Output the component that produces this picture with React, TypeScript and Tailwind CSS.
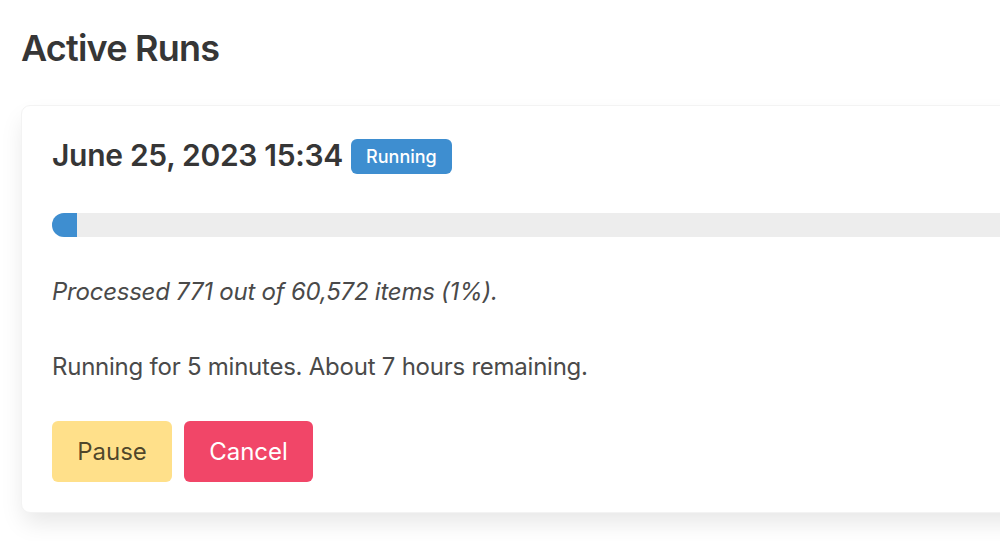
export default function App() {
  const processed = 771;
  const total = 60572;
  const pct = 2.5;

  return (
    <div className="h-[541px] w-[1000px] overflow-hidden bg-white font-['Inter','Liberation_Sans',sans-serif] text-[#4a4a4a]">
      <div className="w-[1100px] pl-[21px] pt-[28px]">
        <h1 className="text-[36px] leading-[40px] font-semibold tracking-[-0.022em] text-[#363636]">Active Runs</h1>

        <div className="mt-[37px] rounded-[9px] border border-[#f3f3f3] bg-white pl-[30px] pr-[31px] pt-[30px] pb-[30px] shadow-[0_12px_24px_-3px_rgba(10,10,10,0.1)]">
          <div className="flex items-center gap-[8px]">
            <h2 className="text-[30px] leading-[36px] font-semibold tracking-[-0.01em] text-[#363636]">June 25, 2023 15:34</h2>
            <span className="mt-[3px] inline-flex h-[35px] items-center rounded-[6px] bg-[#3e8ed0] px-[15px] text-[18px] font-medium text-white">
              Running
            </span>
          </div>

          <div className="mt-[39px] h-[24px] w-full overflow-hidden rounded-full bg-[#ededed]">
            <div className="h-full bg-[#3e8ed0]" style={{ width: `${pct}%` }} />
          </div>

          <p className="mt-[37px] text-[24px] leading-[36px] italic tracking-[-0.01em]">
            Processed {processed} out of {total.toLocaleString("en-US")} items (1%).
          </p>
          <p className="mt-[39px] text-[24px] leading-[36px] tracking-[-0.01em]">
            Running for 5 minutes. About 7 hours remaining.
          </p>

          <div className="mt-[36px] flex gap-[12px]">
            <button className="h-[61px] w-[120px] rounded-[6px] bg-[#ffe08a] text-[24px] text-black/70">Pause</button>
            <button className="h-[61px] w-[129px] rounded-[6px] bg-[#f14668] text-[24px] text-white">Cancel</button>
          </div>
        </div>
      </div>
    </div>
  );
}
